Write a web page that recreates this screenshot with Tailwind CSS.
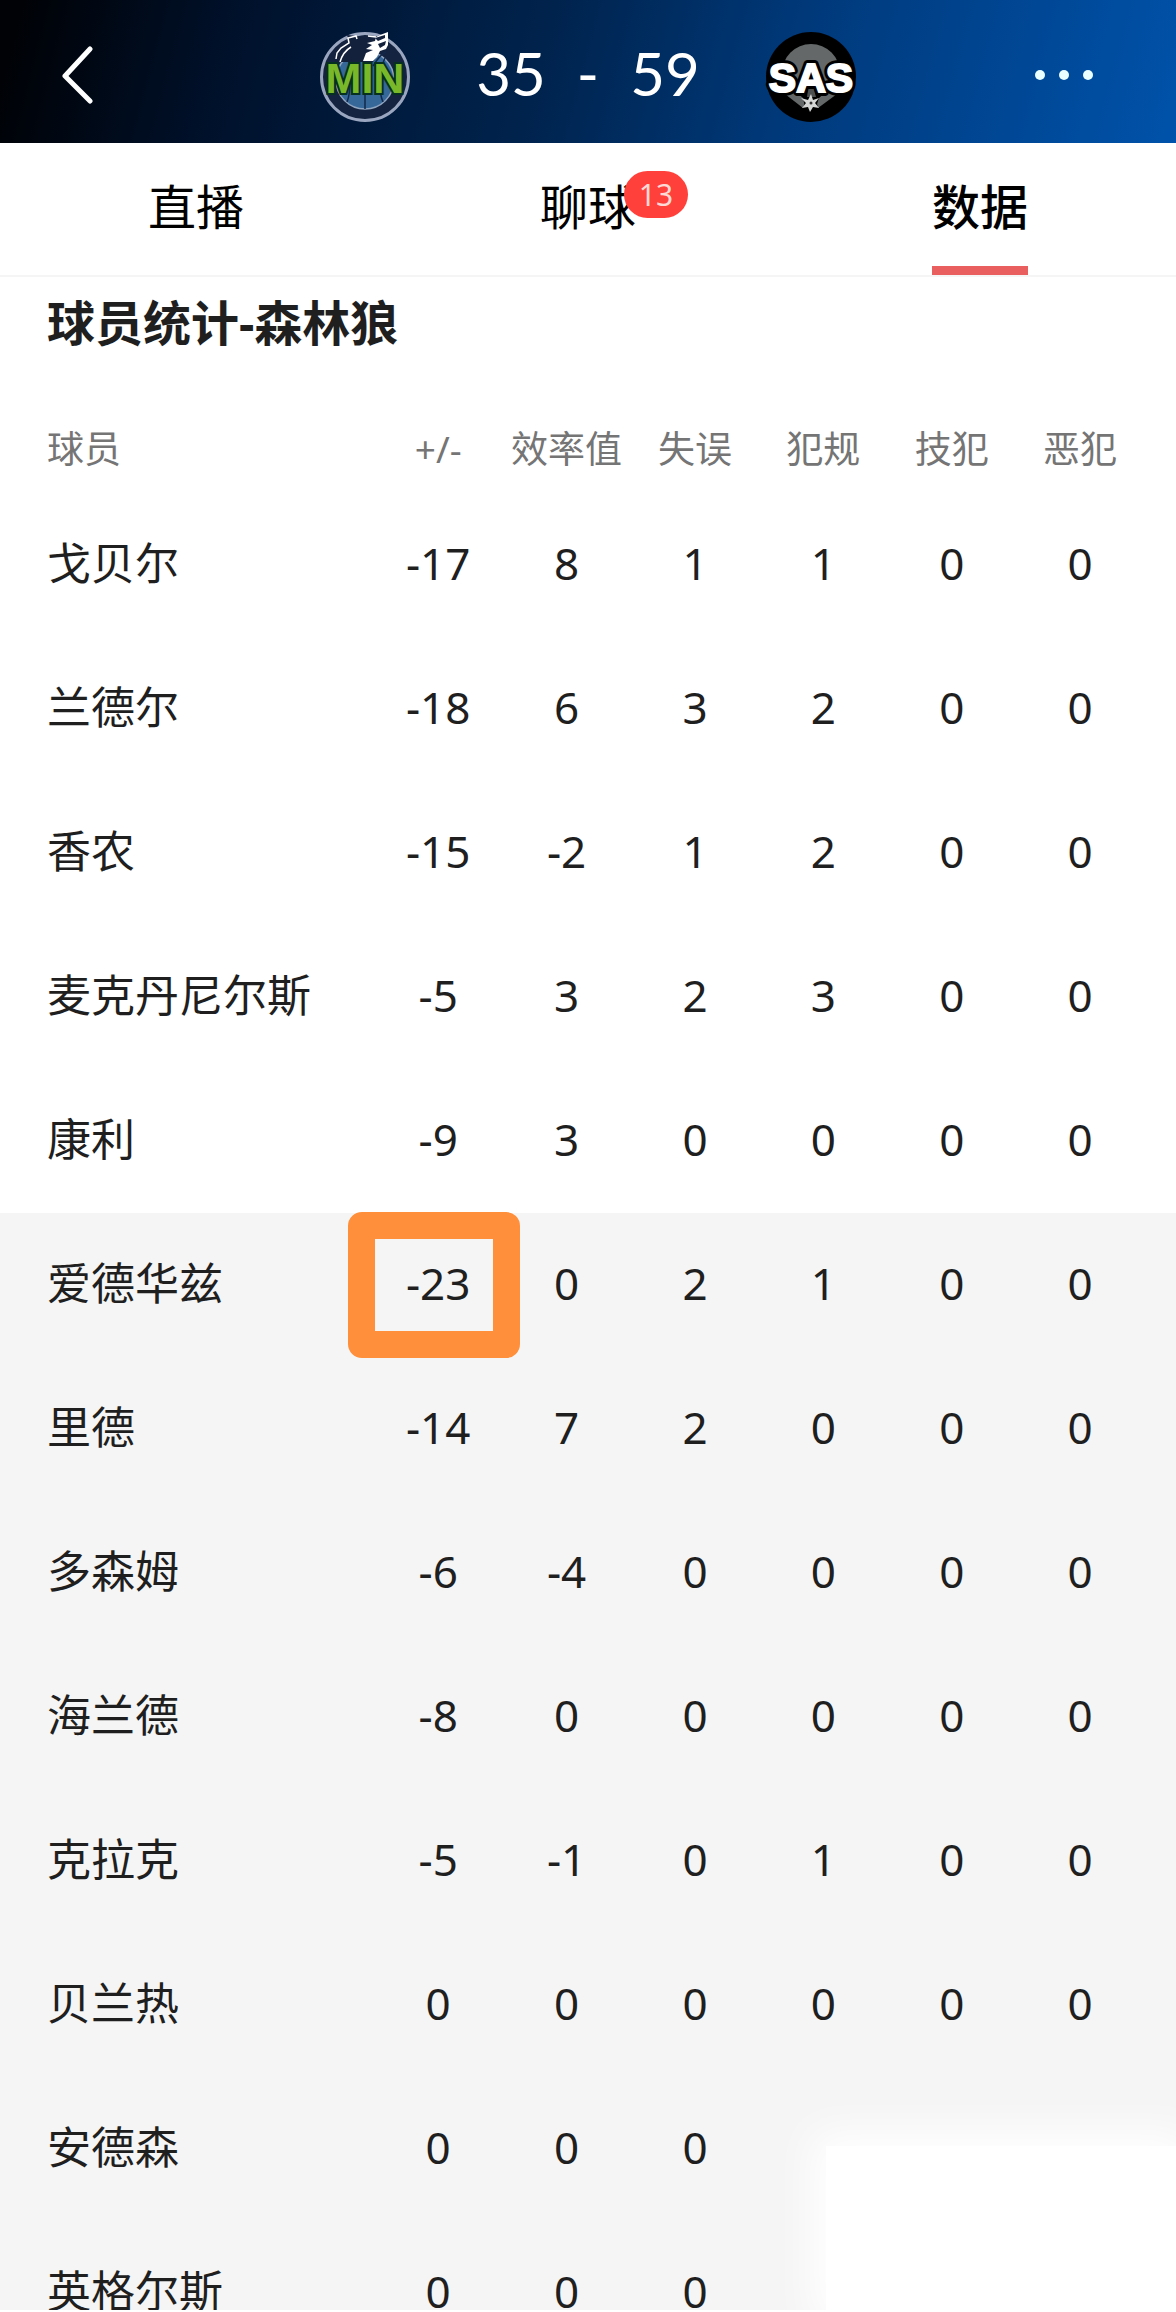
<!DOCTYPE html>
<html lang="zh-CN">
<head>
  <meta charset="UTF-8" />
  <title>球员统计</title>
  <meta name="viewport" content="width=device-width, initial-scale=1.0"/>
  <script src="https://cdn.jsdelivr.net/npm/@tailwindcss/browser@4"></script>
</head>
<body class="relative flex h-screen flex-col overflow-hidden bg-white pb-0.5 font-['Noto_Sans','Noto_Sans_CJK_SC',sans-serif] text-[#1f1f1f]">

  <!-- Score bar -->
  <header class="flex h-[143px] shrink-0 items-center justify-between bg-linear-[105deg,#000206_2%,#00112b_20%,#00234d_46%,#003a7c_68%,#0052aa_100%] px-[52px] text-white">
    <button aria-label="返回" class="flex h-16 w-[90px] items-center">
      <svg class="h-16 w-12" viewBox="0 0 48 64" fill="none" stroke="currentColor" stroke-width="5" stroke-linecap="round" stroke-linejoin="round"><path d="M38 9 13 36 38 61"/></svg>
    </button>

    <div class="flex items-center pt-2.5">
      <svg class="h-[90px] w-[90px] overflow-visible" viewBox="0 0 90 90" role="img" aria-label="MIN">
        <circle cx="45" cy="45" r="43.5" fill="#14233f" stroke="#9aa6bf" stroke-width="3"/>
        <circle cx="45" cy="48" r="29" fill="#36689a" stroke="#8fa5c0" stroke-width="1.5"/>
        <path d="M45 20V77M27 70C31 61 31 35 28 26M63 70C58 58 59 38 65 26M53 34C58 26 63 21 66 20" fill="none" stroke="#12284a" stroke-width="1.5"/>
        <path d="M14 34 17 20 29 10 27 3 37 4 47 7 68 1 67 14 61 18 53 30H16Z" fill="#13213d"/>
        <path d="M35 4Q45 0 58 3" fill="none" stroke="#9aa6bf" stroke-width="2"/>
        <!-- muzzle -->
        <path d="M68 0V13L66 17 60 19 57 25 53 29H43L46 21 53 18 46 17 52 13 47 11 55 9 56 5 60 3Z" fill="#fff"/>
        <path d="M55 6 65 3 65 6 58 9ZM58 12 66 9 65 13 60 16Z" fill="#13213d"/>
        <!-- ear and mane -->
        <path d="M37 7 36 4 28 6 29 11 21 16 17 21 16 27M31 15C26 18 22 23 20 30M48 4 56 5" fill="none" stroke="#fff" stroke-width="1.5"/>
        <text x="45" y="61" text-anchor="middle" font-family="Liberation Sans" font-weight="700" font-size="43" fill="#79b829" stroke="#06301f" stroke-width="4" paint-order="stroke">MIN</text>
      </svg>
      <div class="flex w-[356px] items-center justify-center gap-[31px] pb-2 font-[Lato,sans-serif] text-[60px] leading-[84px]">
        <span>35</span><span>-</span><span>59</span>
      </div>
      <svg class="h-[90px] w-[90px] overflow-visible" viewBox="0 0 90 90" role="img" aria-label="SAS">
        <circle cx="45" cy="45" r="45" fill="#000"/>
        <circle cx="45" cy="41" r="29" fill="#646868"/>
        <path d="M19 62 37 76 41 66 34 60ZM71 62 52 76 50 66 56 60Z" fill="#646868"/>
        <path d="M27 57H63L53 66 50 75H39L37 66Z" fill="#000"/>
        <path d="M42 57H48L50 65H41Z" fill="#4c4f4f"/>
        <path d="M45 62 47 68 53 66 49 71 53 76 47 75 44 80 42 75 36 76 40 71 35 66 42 68Z" fill="#d5d7d7"/>
        <circle cx="45" cy="71" r="1.5" fill="#333"/>
        <text x="45" y="60" text-anchor="middle" font-family="Liberation Sans" font-weight="700" font-size="41" fill="#000" stroke="#000" stroke-width="8" stroke-linejoin="round">SAS</text>
        <text x="45" y="60" text-anchor="middle" font-family="Liberation Sans" font-weight="700" font-size="41" fill="#fff" stroke="#fff" stroke-width="2">SAS</text>
      </svg>
    </div>

    <button aria-label="更多" class="flex h-16 w-[90px] items-center">
      <svg class="h-4 w-16" viewBox="0 0 64 16" fill="#eaffff"><circle cx="6" cy="11" r="5"/><circle cx="30" cy="11" r="5"/><circle cx="54" cy="11" r="5"/></svg>
    </button>
  </header>

  <!-- Tabs -->
  <nav class="grid h-[134px] shrink-0 grid-cols-3 border-b-2 border-[#f5f5f5] text-[48px] leading-[72px] text-black">
    <a href="#live" class="flex justify-center pt-7">直播</a>
    <a href="#chat" class="flex justify-center pt-7">
      <span class="relative">聊球
        <span class="absolute top-0 left-[84px] flex h-[47px] w-16 items-center justify-center rounded-full bg-[#ff403b] text-[30px] leading-none text-[#ffd9d6]">13</span>
      </span>
    </a>
    <a href="#stats" aria-current="page" class="flex justify-center pt-7 font-medium">
      <span class="border-b-[9px] border-[#e95f5f]">数据</span>
    </a>
  </nav>

  <main class="min-h-0 flex-1 overflow-hidden">
    <h2 class="px-[47px] pt-3.5 pb-[52px] text-[48px] leading-[64px] font-bold">球员统计-森林狼</h2>
    <table class="w-full table-fixed text-center text-[44px] leading-[64px]">
      <colgroup>
        <col class="w-[374px]"/><col/><col/><col/><col/><col/><col class="w-[160px]"/>
      </colgroup>
      <thead>
        <tr class="h-[86px] text-[37px] whitespace-nowrap text-[#757575]">
          <th scope="col" class="pb-0.5 pl-[47px] text-left font-normal">球员</th>
          <th scope="col" class="pb-0.5 font-normal">+/-</th>
          <th scope="col" class="pb-0.5 font-normal">效率值</th>
          <th scope="col" class="pb-0.5 font-normal">失误</th>
          <th scope="col" class="pb-0.5 font-normal">犯规</th>
          <th scope="col" class="pb-0.5 font-normal">技犯</th>
          <th scope="col" class="pr-8 pb-0.5 font-normal">恶犯</th>
        </tr>
      </thead>
      <tbody id="players"></tbody>
    </table>
  </main>

  <!-- Soft white patch in the corner -->
  <div class="absolute right-0 bottom-0 h-[166px] w-[350px] bg-white shadow-[0_0_40px_14px_#fff]"></div>

  <script>
    const starters = 5;
    const players = [
      ['戈贝尔', -17, 8, 1, 1, 0, 0],
      ['兰德尔', -18, 6, 3, 2, 0, 0],
      ['香农', -15, -2, 1, 2, 0, 0],
      ['麦克丹尼尔斯', -5, 3, 2, 3, 0, 0],
      ['康利', -9, 3, 0, 0, 0, 0],
      ['爱德华兹', -23, 0, 2, 1, 0, 0],
      ['里德', -14, 7, 2, 0, 0, 0],
      ['多森姆', -6, -4, 0, 0, 0, 0],
      ['海兰德', -8, 0, 0, 0, 0, 0],
      ['克拉克', -5, -1, 0, 1, 0, 0],
      ['贝兰热', 0, 0, 0, 0, 0, 0],
      ['安德森', 0, 0, 0, '', '', ''],
      ['英格尔斯', 0, 0, 0, '', '', '']
    ];

    const frame = '<span class="absolute -inset-y-px -left-[26px] -right-[18px] rounded-[14px] border-[27px] border-[#ff8f3a]"></span>';

    document.getElementById('players').innerHTML = players.map(([name, ...stats], i) => `
      <tr class="h-36 ${i < starters ? 'bg-white' : 'bg-[#f5f5f5]'}">
        <th scope="row" class="pb-1 pl-[47px] text-left font-normal whitespace-nowrap">${name}</th>
        ${stats.map((v, c) => `<td class="relative pb-1 ${c === 5 ? 'pr-8' : ''}">${v}${v === -23 ? frame : ''}</td>`).join('')}
      </tr>`).join('');
  </script>
</body>
</html>
